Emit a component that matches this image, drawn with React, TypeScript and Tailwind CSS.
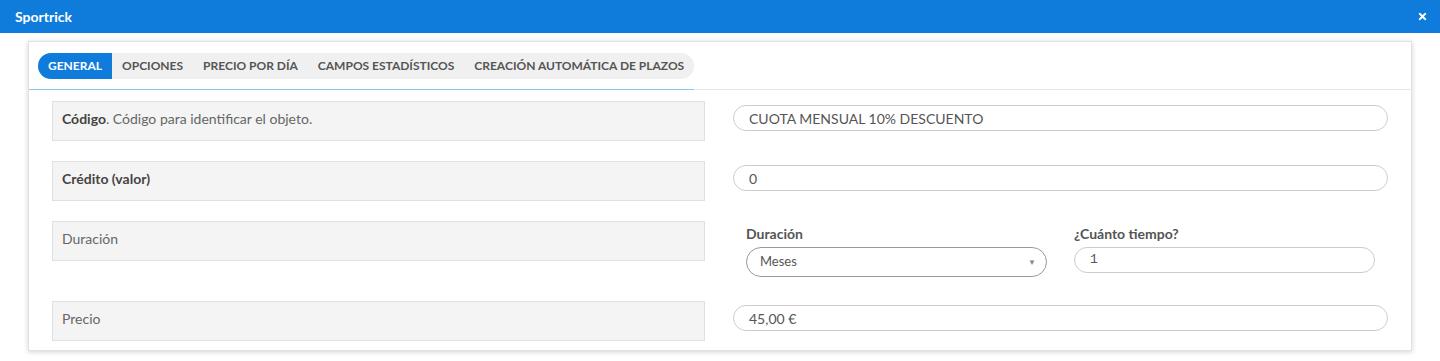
import { FaTimes } from "react-icons/fa";

const tabs = [
  "GENERAL",
  "OPCIONES",
  "PRECIO POR DÍA",
  "CAMPOS ESTADÍSTICOS",
  "CREACIÓN AUTOMÁTICA DE PLAZOS",
];

function Field({ value, mono = false }: { value: string; mono?: boolean }) {
  return (
    <div
      className={`h-[26px] rounded-full border border-[#cccccc] bg-white pl-[15px] flex items-center text-[#555] ${
        mono ? "font-['Liberation_Mono',monospace] text-[13px]" : "text-[14px]"
      }`}
    >
      {value}
    </div>
  );
}

function LabelBox({ children }: { children: React.ReactNode }) {
  return (
    <div className="h-10 bg-[#f4f4f4] border border-[#e0e0e0] px-[9px] pt-[7px] text-[14px] leading-5 text-[#666]">
      {children}
    </div>
  );
}

export default function App() {
  return (
    <div className="w-[1440px] h-[361px] bg-white font-['Lato','Liberation_Sans',sans-serif] overflow-hidden">
      <div className="h-[33px] bg-[#0f7bdb] flex items-center justify-between pl-[15px] pr-[12px]">
        <span className="text-white font-bold text-[14px]">Sportrick</span>
        <FaTimes className="text-white" size={11} />
      </div>

      <div className="mx-[28px] w-[1384px] mt-[8px] bg-white border border-[#e3e3e3] shadow-[0_1px_5px_rgba(0,0,0,0.18)]">
        <div className="flex items-end">
          <div className="flex flex-col">
            <div className="pl-[9px] pt-[11px] pb-[10px]">
              <div className="flex h-[26px] rounded-full bg-[#f0f0f0]">
                {tabs.map((t, i) => (
                  <div
                    key={t}
                    className={`px-[10px] flex items-center text-[12px] font-bold ${
                      i === 0
                        ? "bg-[#0f7bdb] text-white rounded-l-full"
                        : "text-[#555]"
                    }`}
                  >
                    {t}
                  </div>
                ))}
              </div>
            </div>
            <div className="h-px bg-[#8ec6ef]" />
          </div>
          <div className="flex-1 h-px bg-[#e8e8e8]" />
        </div>

        <div className="px-[23px] pt-[11px] pb-[9px] flex flex-col gap-5">
          <div className="grid grid-cols-[653px_655px] gap-[28px]">
            <LabelBox>
              <b className="text-[#444]">Código</b>. Código para identificar el objeto.
            </LabelBox>
            <div className="pt-1">
              <Field value="CUOTA MENSUAL 10% DESCUENTO" />
            </div>
          </div>

          <div className="grid grid-cols-[653px_655px] gap-[28px]">
            <LabelBox>
              <b className="text-[#444]">Crédito (valor)</b>
            </LabelBox>
            <div className="pt-1">
              <Field value="0" />
            </div>
          </div>

          <div className="grid grid-cols-[653px_655px] gap-[28px] h-[60px]">
            <LabelBox>Duración</LabelBox>
            <div className="px-[13px] pt-[3px] grid grid-cols-[301px_301px] gap-[27px]">
              <div>
                <div className="text-[14px] font-bold text-[#555] leading-5 mb-[3px]">Duración</div>
                <div className="h-[30px] rounded-full border border-[#999] bg-white pl-[13px] pr-[10px] flex items-center justify-between text-[13px] text-[#555]">
                  <span>Meses</span>
                  <span className="text-[8px] text-[#888]">▼</span>
                </div>
              </div>
              <div>
                <div className="text-[14px] font-bold text-[#555] leading-5 mb-[3px]">¿Cuánto tiempo?</div>
                <Field value="1" mono />
              </div>
            </div>
          </div>

          <div className="grid grid-cols-[653px_655px] gap-[28px]">
            <LabelBox>Precio</LabelBox>
            <div className="pt-1">
              <Field value="45,00 €" />
            </div>
          </div>
        </div>
      </div>
    </div>
  );
}
